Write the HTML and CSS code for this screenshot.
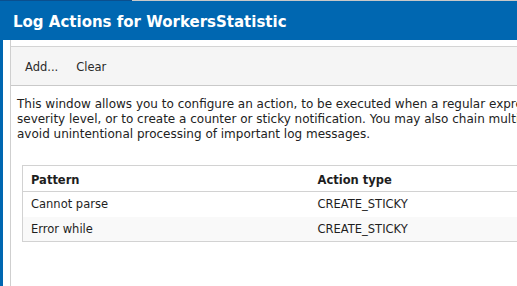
FILE: index.html
```html
<!DOCTYPE html>
<html>
<head>
    <meta charset="utf-8">
    <title>Log Actions for WorkersStatistic</title>
    <link rel="stylesheet" href="styles.css">
</head>
<body>
    <div class="topline"><span class="topline-dark"></span></div>
    <div class="titlebar">Log Actions for WorkersStatistic</div>
    <div class="frame">
        <div class="panel">
            <div class="toolbar">
                <span class="tool">Add...</span>
                <span class="tool">Clear</span>
            </div>
            <p class="intro">This window allows you to configure an action, to be executed when a regular expression matches a log message, e.g. to change its<br>severity level, or to create a counter or sticky notification. You may also chain multiple actions, but be careful to<br>avoid unintentional processing of important log messages.</p>
            <table class="grid">
                <thead>
                    <tr><th class="col-pattern">Pattern</th><th>Action type</th></tr>
                </thead>
                <tbody>
                    <tr><td>Cannot parse</td><td>CREATE_STICKY</td></tr>
                    <tr class="alt"><td>Error while</td><td>CREATE_STICKY</td></tr>
                </tbody>
            </table>
        </div>
    </div>
</body>
</html>
```

FILE: styles.css
```css
*{margin:0;padding:0;box-sizing:border-box;}
html,body{width:517px;height:286px;overflow:hidden;background:#fff;}
body{font-family:"DejaVu Sans",Verdana,sans-serif;font-size:11.5px;color:#1e1e1e;}

.topline{height:1px;background:#c8c8c8;display:flex;}
.topline-dark{width:132px;background:#0b4f8e;}

.titlebar{height:39px;background:#0067b1;color:#fff;font-weight:bold;font-size:15px;
    padding:0 0 0 13px;line-height:42px;white-space:nowrap;}

.frame{border-left:3px solid #0067b1;height:246px;padding:0 0 0 7px;}
.panel{border-left:1px solid #cfcfcf;height:100%;padding-top:6px;}

.toolbar{height:40px;background:#f5f5f5;border-top:1px solid #d4d4d4;border-bottom:1px solid #c9c9c9;
    display:flex;align-items:center;gap:18px;padding:2px 0 0 14px;color:#2a2a2a;}

.intro{white-space:nowrap;font-size:12px;line-height:15px;margin:11px 0 0 6px;color:#222;}

.grid{border-collapse:collapse;margin:23px 0 0 11px;width:560px;border:1px solid #d2d2d2;border-right:0;}
.grid th,.grid td{text-align:left;padding:0 0 0 8px;white-space:nowrap;}
.grid th{height:26px;font-weight:bold;border-bottom:1px solid #d2d2d2;padding-top:2px;}
.grid td{height:25px;}
.grid .col-pattern{width:287px;}
.grid tr.alt td{background:#f9f9f9;}
```
